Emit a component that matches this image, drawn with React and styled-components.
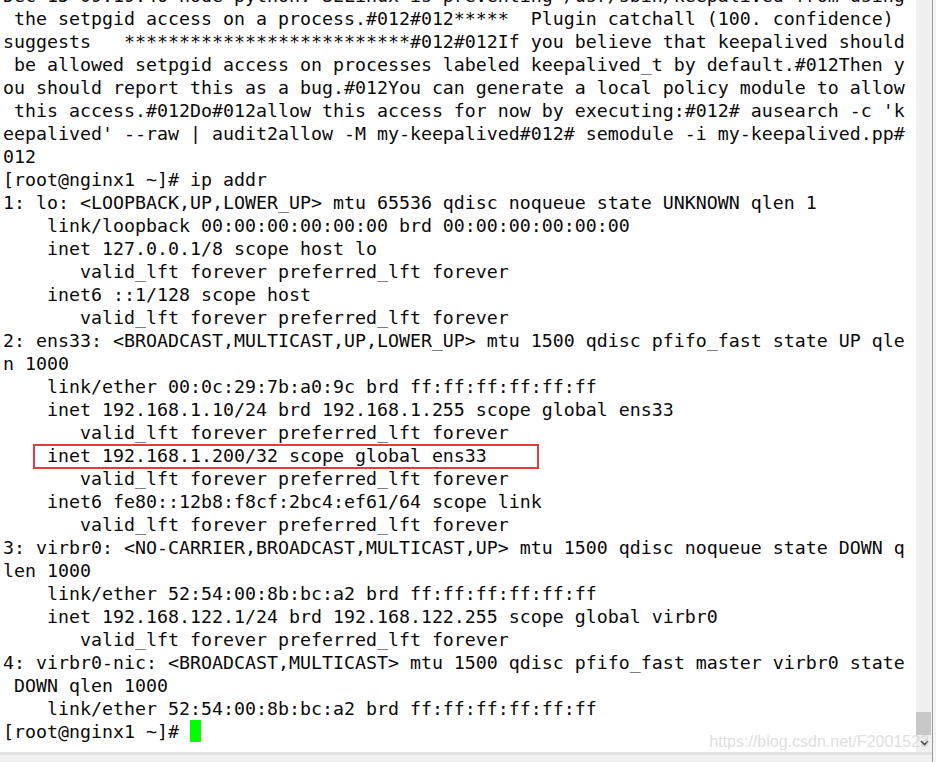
import React from "react";
import styled, { createGlobalStyle } from "styled-components";

const GlobalStyle = createGlobalStyle`
  html, body {
    margin: 0;
    padding: 0;
    background: #ffffff;
    overflow: hidden;
  }
`;

const Window = styled.div`
  position: relative;
  width: 936px;
  height: 762px;
  display: grid;
  grid-template-columns: 1fr 16px 1px 3px;
  grid-template-rows: 1fr 10px;
  background: #ffffff;
  overflow: hidden;
`;

const Screen = styled.div`
  grid-column: 1;
  grid-row: 1;
  overflow: hidden;
  padding-left: 3px;
  background: #ffffff;
`;

/* scrolled content: the first row is mostly out of view */
const Lines = styled.div`
  margin-top: -16px;
  font-family: "DejaVu Sans Mono", "Liberation Mono", monospace;
  font-size: 18.27px;
  color: #0a0a0a;
`;

const Line = styled.div`
  position: relative;
  height: 23px;
  line-height: 23px;
  white-space: pre;
`;

const Mark = styled.span`
  position: absolute;
  left: 30px;
  top: 0px;
  width: 502px;
  height: 21px;
  border: 2px solid #e63b3b;
`;

const Cursor = styled.span`
  display: inline-block;
  vertical-align: top;
  width: 11px;
  height: 22px;
  background: #00ff00;
`;

const ScrollTrack = styled.div`
  grid-column: 2;
  grid-row: 1;
  background: #f0f0f0;
  display: flex;
  flex-direction: column;
  justify-content: flex-end;
  padding-bottom: 3px;
`;

const Thumb = styled.div`
  height: 23px;
  width: 15px;
  background: #c8c8c8;
`;

const Arrow = styled.div`
  height: 13px;
  display: flex;
  align-items: center;
  justify-content: center;
  padding-top: 1px;
`;

const Divider = styled.div`
  grid-column: 3;
  grid-row: 1 / span 2;
  background: #9a9a9a;
`;

const Edge = styled.div`
  grid-column: 4;
  grid-row: 1 / span 2;
  background: #f4f4f4;
`;

const BottomBar = styled.div`
  grid-column: 1 / span 2;
  grid-row: 2;
  background: #f0f0f0;
  border-top: 3px solid #e2e2e2;
`;

const Watermark = styled.div`
  position: absolute;
  right: 7px;
  bottom: 11px;
  font-family: "Liberation Sans", Arial, sans-serif;
  font-size: 16px;
  line-height: 18px;
  color: rgba(195, 195, 195, 0.55);
  pointer-events: none;
`;

const rows = [
  "Dec 15 09:19:46 node python: SELinux is preventing /usr/sbin/keepalived from using",
  " the setpgid access on a process.#012#012*****  Plugin catchall (100. confidence)",
  "suggests   **************************#012#012If you believe that keepalived should",
  " be allowed setpgid access on processes labeled keepalived_t by default.#012Then y",
  "ou should report this as a bug.#012You can generate a local policy module to allow",
  " this access.#012Do#012allow this access for now by executing:#012# ausearch -c 'k",
  "eepalived' --raw | audit2allow -M my-keepalived#012# semodule -i my-keepalived.pp#",
  "012",
  "[root@nginx1 ~]# ip addr",
  "1: lo: <LOOPBACK,UP,LOWER_UP> mtu 65536 qdisc noqueue state UNKNOWN qlen 1",
  "    link/loopback 00:00:00:00:00:00 brd 00:00:00:00:00:00",
  "    inet 127.0.0.1/8 scope host lo",
  "       valid_lft forever preferred_lft forever",
  "    inet6 ::1/128 scope host",
  "       valid_lft forever preferred_lft forever",
  "2: ens33: <BROADCAST,MULTICAST,UP,LOWER_UP> mtu 1500 qdisc pfifo_fast state UP qle",
  "n 1000",
  "    link/ether 00:0c:29:7b:a0:9c brd ff:ff:ff:ff:ff:ff",
  "    inet 192.168.1.10/24 brd 192.168.1.255 scope global ens33",
  "       valid_lft forever preferred_lft forever",
  "    inet 192.168.1.200/32 scope global ens33",
  "       valid_lft forever preferred_lft forever",
  "    inet6 fe80::12b8:f8cf:2bc4:ef61/64 scope link",
  "       valid_lft forever preferred_lft forever",
  "3: virbr0: <NO-CARRIER,BROADCAST,MULTICAST,UP> mtu 1500 qdisc noqueue state DOWN q",
  "len 1000",
  "    link/ether 52:54:00:8b:bc:a2 brd ff:ff:ff:ff:ff:ff",
  "    inet 192.168.122.1/24 brd 192.168.122.255 scope global virbr0",
  "       valid_lft forever preferred_lft forever",
  "4: virbr0-nic: <BROADCAST,MULTICAST> mtu 1500 qdisc pfifo_fast master virbr0 state",
  " DOWN qlen 1000",
  "    link/ether 52:54:00:8b:bc:a2 brd ff:ff:ff:ff:ff:ff",
];

const MARKED_ROW = 20;

export default function App() {
  return (
    <>
      <GlobalStyle />
      <Window>
        <Screen>
          <Lines>
            {rows.map((text, i) => (
              <Line key={i}>
                {i === MARKED_ROW && <Mark />}
                {text}
              </Line>
            ))}
            <Line>
              {"[root@nginx1 ~]# "}
              <Cursor />
            </Line>
          </Lines>
        </Screen>
        <ScrollTrack>
          <Thumb />
          <Arrow>
            <svg width="9" height="6" viewBox="0 0 9 6">
              <path d="M1 1 L4.5 4.5 L8 1" fill="none" stroke="#444" strokeWidth="1.6" />
            </svg>
          </Arrow>
        </ScrollTrack>
        <Divider />
        <Edge />
        <BottomBar />
        <Watermark>https://blog.csdn.net/F2001523</Watermark>
      </Window>
    </>
  );
}
